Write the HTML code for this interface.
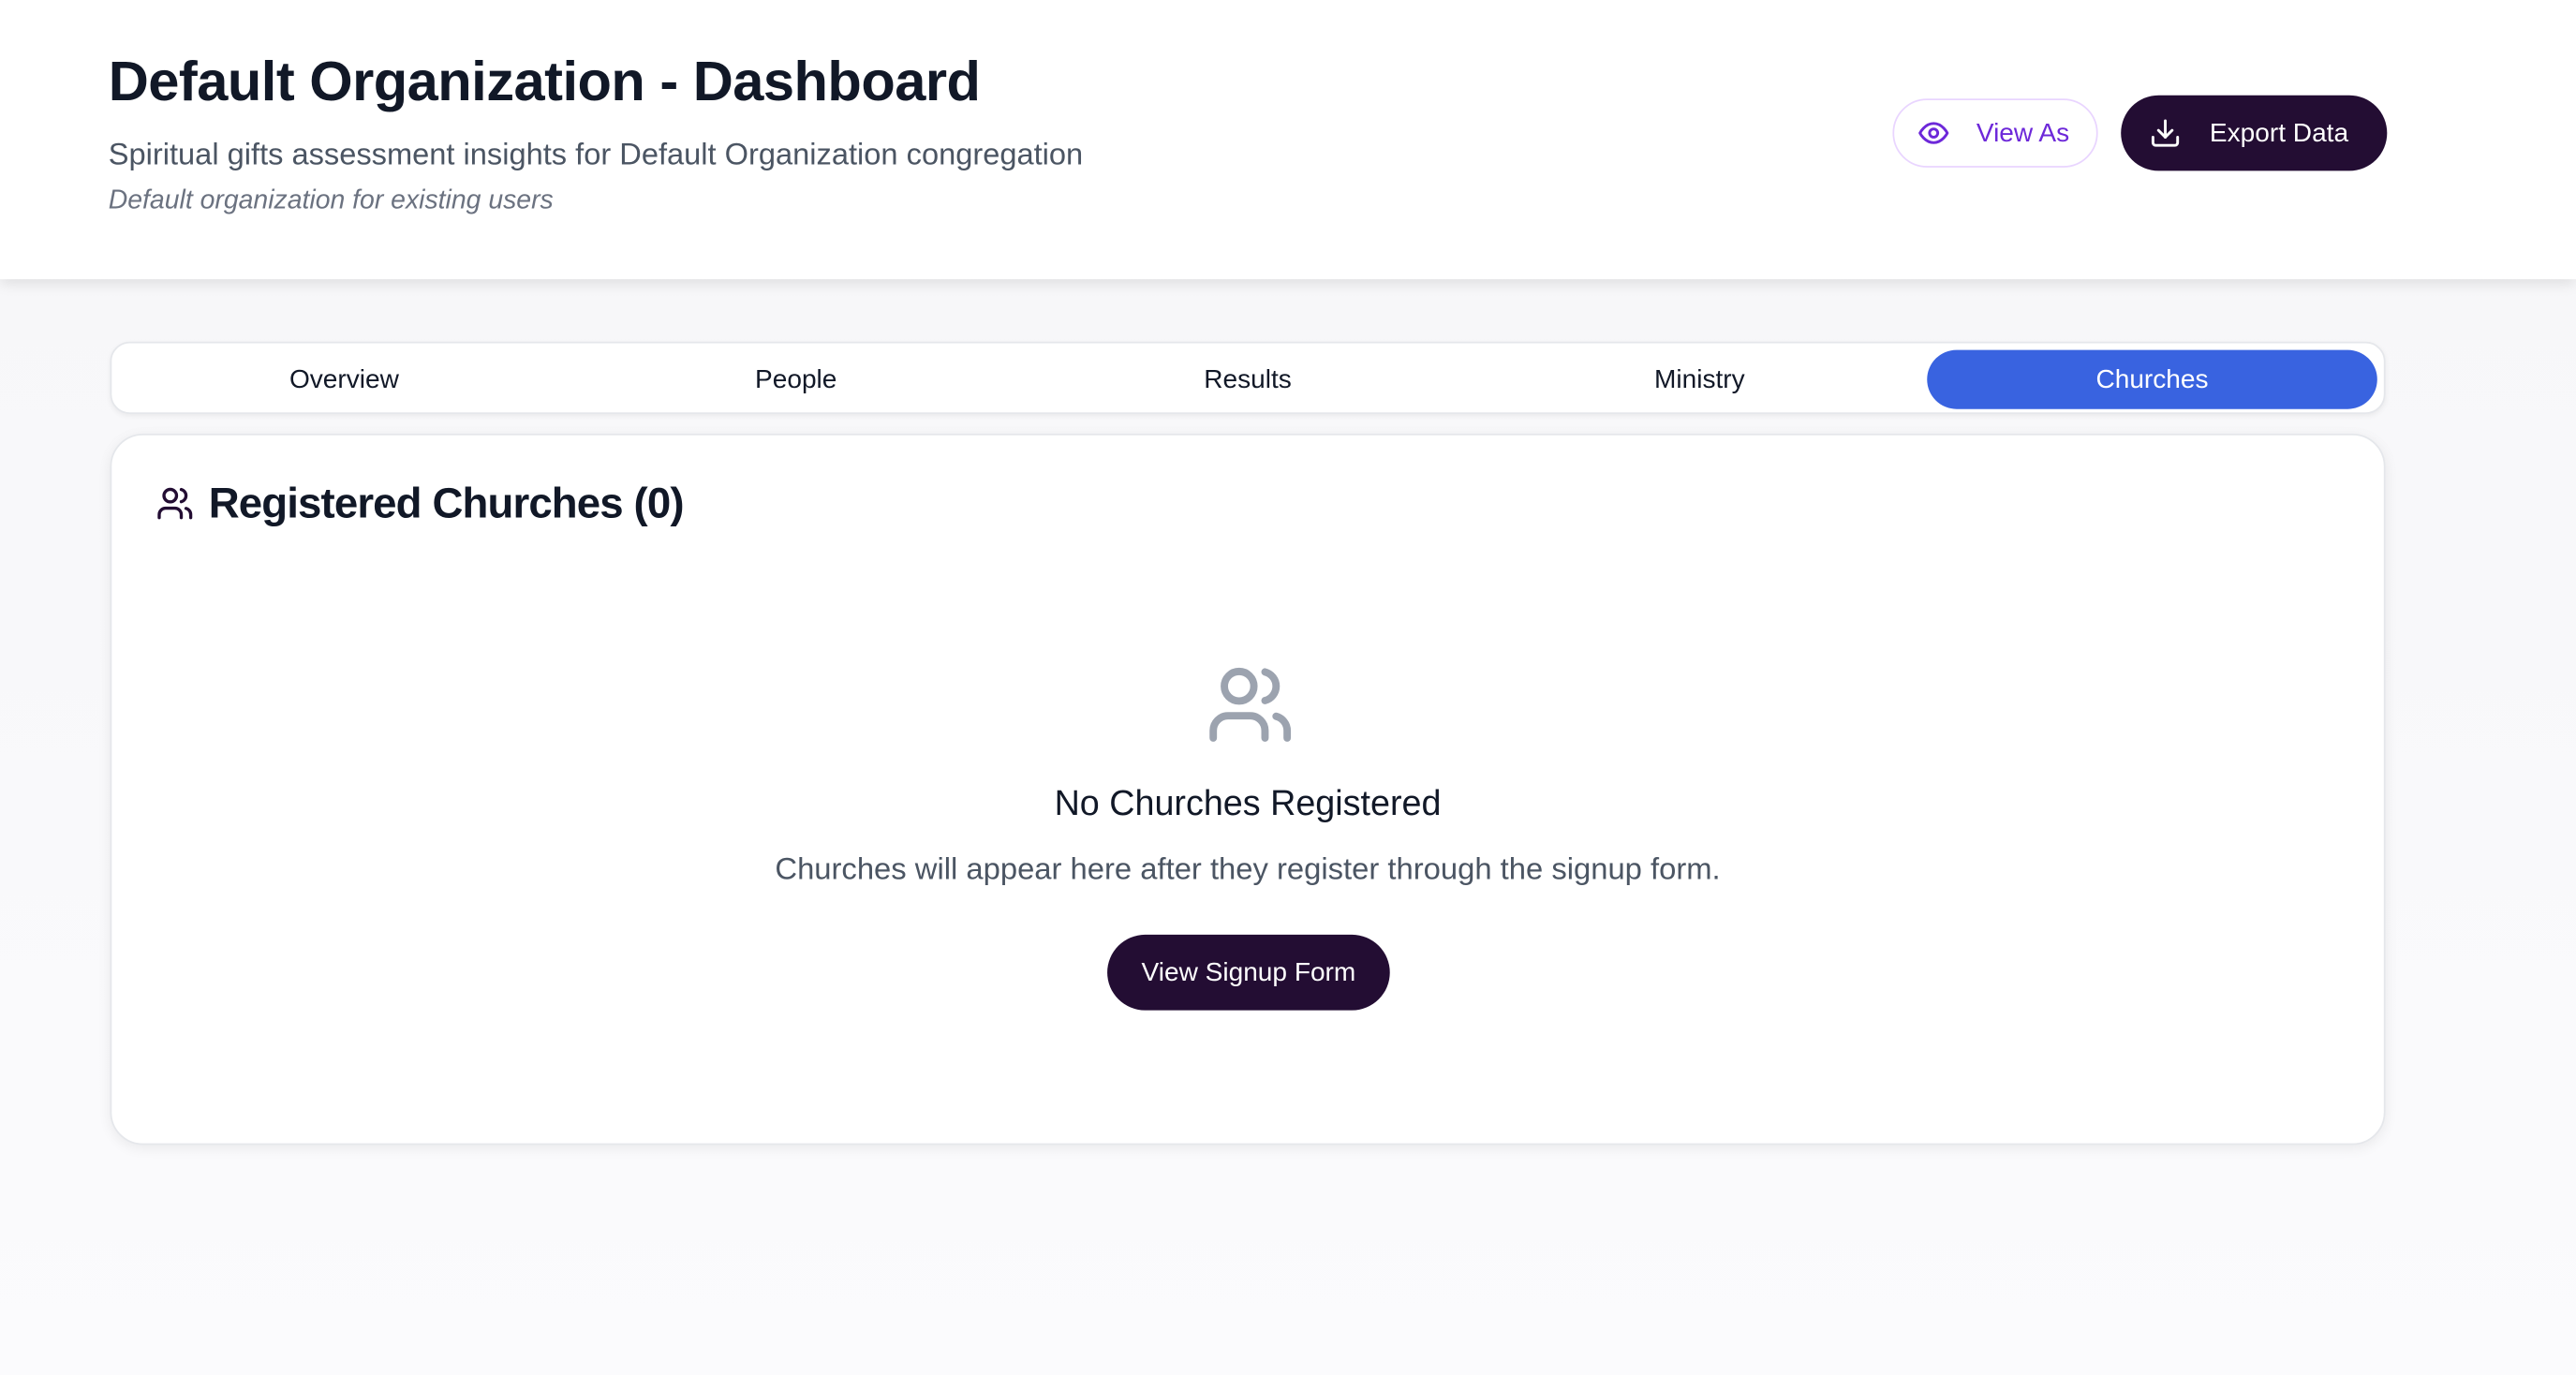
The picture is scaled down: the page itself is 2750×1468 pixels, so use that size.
<!DOCTYPE html>
<html><head><meta charset="utf-8">
<style>
html,body{margin:0;padding:0;}
body{width:2750px;height:1468px;overflow:hidden;background:#f8f8fa;font-family:"Liberation Sans",sans-serif;}
#s{width:1568px;height:837px;transform:scale(1.75383);transform-origin:0 0;position:relative;background:linear-gradient(#f6f6f8,#fbfbfd);}
.hdr{position:absolute;left:0;top:0;width:1568px;height:170px;background:#fff;box-shadow:0 3px 8px rgba(0,0,0,.10);}
.abs{position:absolute;white-space:nowrap;}
h1{margin:0;position:absolute;left:66px;top:31px;font-size:34px;font-weight:bold;color:#111827;letter-spacing:-0.3px;}
.sub{left:66px;top:83px;font-size:18.6px;color:#4b5563;}
.it{left:66px;top:113px;font-size:16.2px;color:#6b7280;font-style:italic;}
.btn{position:absolute;display:flex;align-items:center;box-sizing:border-box;border-radius:23px;font-size:16px;}
.va{left:1152px;top:60px;width:125px;height:42px;border:1.5px solid #e9d5ff;color:#6d28d9;background:#fff;}
.ex{left:1291px;top:58px;width:162px;height:46px;background:#230d33;color:#fff;}
.btn span{position:relative;top:1px;}
.tabs{position:absolute;left:67px;top:208px;width:1385px;height:44px;box-sizing:border-box;background:#fff;border:1px solid #e5e7eb;border-radius:12px;box-shadow:0 1px 3px rgba(0,0,0,.06);}
.tab{position:absolute;top:1px;width:275px;height:42px;line-height:44px;text-align:center;font-size:16px;color:#111827;}
.act{position:absolute;left:1105px;top:4px;width:274px;height:36px;background:#3963e0;border-radius:18px;color:#fff;text-align:center;line-height:38px;font-size:16px;}
.card{position:absolute;left:67px;top:264px;width:1385px;height:433px;box-sizing:border-box;background:#fff;border:1px solid #e5e7eb;border-radius:20px;box-shadow:0 2px 8px rgba(0,0,0,.07);}
</style></head><body><div id="s">
<div class="hdr"></div>
<h1>Default Organization - Dashboard</h1>
<div class="abs sub">Spiritual gifts assessment insights for Default Organization congregation</div>
<div class="abs it">Default organization for existing users</div>
<div class="btn va"><svg style="margin-left:14px" width="20" height="20" viewBox="0 0 24 24" fill="none" stroke="#6d28d9" stroke-width="2" stroke-linecap="round" stroke-linejoin="round"><path d="M2 12s3.5-7 10-7 10 7 10 7-3.5 7-10 7S2 12 2 12z"/><circle cx="12" cy="12" r="3"/></svg><span style="margin-left:16px">View As</span></div>
<div class="btn ex"><svg style="margin-left:17px" width="20" height="20" viewBox="0 0 24 24" fill="none" stroke="#fff" stroke-width="2" stroke-linecap="round" stroke-linejoin="round"><path d="M21 15v4a2 2 0 0 1-2 2H5a2 2 0 0 1-2-2v-4"/><path d="M7 10l5 5 5-5"/><path d="M12 15V3"/></svg><span style="margin-left:17px">Export Data</span></div>
<div class="tabs">
<div class="tab" style="left:4px">Overview</div>
<div class="tab" style="left:279px">People</div>
<div class="tab" style="left:554px">Results</div>
<div class="tab" style="left:829px">Ministry</div>
<div class="act">Churches</div>
</div>
<div class="card">
<svg style="position:absolute;left:27px;top:30px" width="23" height="23" viewBox="0 0 24 24" fill="none" stroke="#230d33" stroke-width="2" stroke-linecap="round" stroke-linejoin="round"><path d="M16 21v-2a4 4 0 0 0-4-4H6a4 4 0 0 0-4 4v2"/><circle cx="9" cy="7" r="4"/><path d="M22 21v-2a4 4 0 0 0-3-3.87"/><path d="M16 3.13a4 4 0 0 1 0 7.75"/></svg>
<div class="abs" style="left:59px;top:26px;font-size:26px;font-weight:600;color:#111827;letter-spacing:-0.5px">Registered Churches (0)</div>
<svg style="position:absolute;left:666px;top:137px" width="54" height="54" viewBox="0 0 24 24" fill="none" stroke="#9ca3af" stroke-width="2" stroke-linecap="round" stroke-linejoin="round"><path d="M16 21v-2a4 4 0 0 0-4-4H6a4 4 0 0 0-4 4v2"/><circle cx="9" cy="7" r="4"/><path d="M22 21v-2a4 4 0 0 0-3-3.87"/><path d="M16 3.13a4 4 0 0 1 0 7.75"/></svg>
<div class="abs" style="left:0;width:1383px;text-align:center;top:212px;font-size:21.5px;color:#111827">No Churches Registered</div>
<div class="abs" style="left:0;width:1383px;text-align:center;top:253px;font-size:18.7px;color:#4b5563">Churches will appear here after they register through the signup form.</div>
<div class="btn" style="left:606px;top:304px;width:172px;height:46px;background:#230d33;color:#fff;justify-content:center"><span>View Signup Form</span></div>
</div>
</div></body></html>
